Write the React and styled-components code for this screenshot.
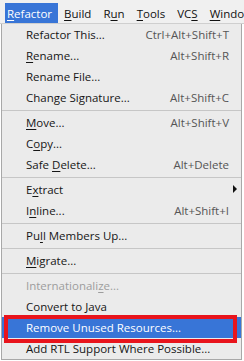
import React from "react";
import styled, { createGlobalStyle, css } from "styled-components";

const GlobalStyle = createGlobalStyle`
  html, body { margin: 0; padding: 0; background: #ffffff; }
  body { font-family: "Open Sans", "Noto Sans", sans-serif; }
  * { box-sizing: border-box; }
`;

const Frame = styled.div`
  position: relative;
  width: 244px;
  height: 361px;
  overflow: hidden;
  background: #ffffff;
  font-size: 11.5px;
  color: #1a1a1a;
`;

const MenuBar = styled.div`
  display: flex;
  align-items: flex-end;
  gap: 4px;
  height: 24px;
  padding-left: 5px;
  background: #f0f0f0;
  border-bottom: 1px solid #cfcfcf;
  white-space: nowrap;
`;

const BarItem = styled.div`
  display: flex;
  align-items: center;
  height: 20px;
  padding: 0 6px 0 2px;
  color: #111;
  ${(p) =>
    p.$active &&
    css`
      background: #3875d7;
      color: #ffffff;
    `}
`;

const Mn = styled.span`
  text-decoration: underline;
  text-underline-offset: 2px;
  text-decoration-thickness: 1px;
`;

const Popup = styled.div`
  margin-left: 1px;
  width: 241px;
  background: #ebebeb;
  border: 1px solid #a8a8a8;
  border-top: none;
`;

const Item = styled.div`
  display: flex;
  align-items: center;
  height: 21px;
  padding: 0 12px 1px 24px;
  white-space: nowrap;
  color: #161616;
  ${(p) =>
    p.$disabled &&
    css`
      color: #9d9d9d;
    `}
  ${(p) =>
    p.$active &&
    css`
      background: #3875d7;
      color: #ffffff;
    `}
`;

const Shortcut = styled.span`
  margin-left: auto;
  color: #555555;
`;

const Arrow = styled.span`
  margin-left: auto;
  margin-right: -8px;
  width: 0;
  height: 0;
  border-top: 4px solid transparent;
  border-bottom: 4px solid transparent;
  border-left: 4px solid #111;
`;

const Separator = styled.div`
  height: 4px;
  padding-top: 2px;
  &::before {
    content: "";
    display: block;
    height: 1px;
    background: #c6c6c6;
  }
`;

const Annotation = styled.div`
  position: absolute;
  left: 4px;
  top: 315px;
  width: 233px;
  height: 28px;
  border: 4px solid #e8141c;
  pointer-events: none;
`;

const bar = [
  { pre: "", mn: "R", post: "efactor", active: true },
  { pre: "", mn: "B", post: "uild" },
  { pre: "R", mn: "u", post: "n" },
  { pre: "", mn: "T", post: "ools" },
  { pre: "VC", mn: "S", post: "" },
  { pre: "", mn: "W", post: "indow" },
];

const menu = [
  { label: ["Refactor This..."], sc: "Ctrl+Alt+Shift+T" },
  { label: ["", "R", "ename..."], sc: "Alt+Shift+R" },
  { label: ["Rename File..."] },
  { label: ["Change Si", "g", "nature..."], sc: "Alt+Shift+C" },
  { sep: true },
  { label: ["", "M", "ove..."], sc: "Alt+Shift+V" },
  { label: ["C", "o", "py..."] },
  { label: ["Safe ", "D", "elete..."], sc: "Alt+Delete" },
  { sep: true },
  { label: ["E", "x", "tract"], sub: true },
  { label: ["I", "n", "line..."], sc: "Alt+Shift+I" },
  { sep: true },
  { label: ["Pu", "l", "l Members Up..."] },
  { sep: true },
  { label: ["", "M", "igrate..."] },
  { sep: true },
  { label: ["Internationali", "z", "e..."], disabled: true },
  { label: ["Convert to Java"] },
  { label: ["Remove Unused Resources..."], active: true },
  { label: ["Add RTL Support Where Possible..."] },
];

function Label({ parts }) {
  if (parts.length === 1) return <span>{parts[0]}</span>;
  return (
    <span>
      {parts[0]}
      <Mn>{parts[1]}</Mn>
      {parts[2]}
    </span>
  );
}

export default function App() {
  return (
    <>
      <GlobalStyle />
      <Frame>
        <MenuBar>
          {bar.map((b, i) => (
            <BarItem key={i} $active={b.active}>
              {b.pre}
              <Mn>{b.mn}</Mn>
              {b.post}
            </BarItem>
          ))}
        </MenuBar>
        <Popup>
          {menu.map((m, i) =>
            m.sep ? (
              <Separator key={i} />
            ) : (
              <Item key={i} $active={m.active} $disabled={m.disabled}>
                <Label parts={m.label} />
                {m.sc && <Shortcut>{m.sc}</Shortcut>}
                {m.sub && <Arrow />}
              </Item>
            )
          )}
        </Popup>
        <Annotation />
      </Frame>
    </>
  );
}
